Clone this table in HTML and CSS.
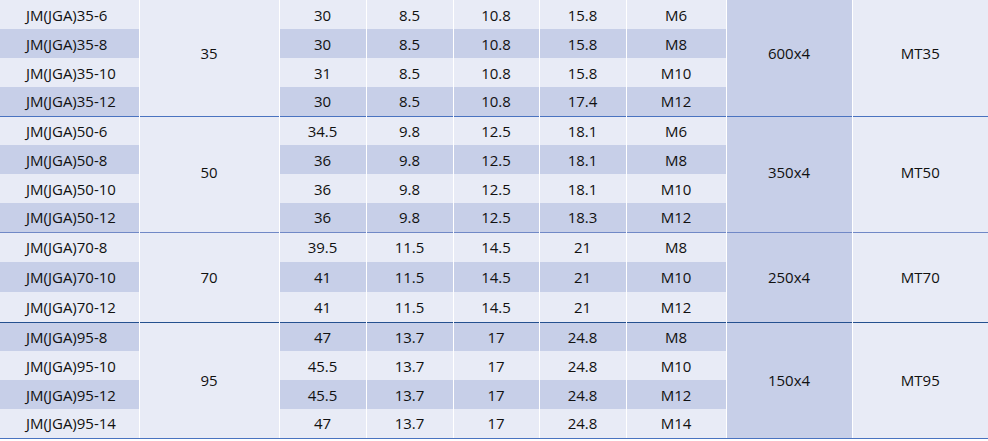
FILE: index.html
```html
<!DOCTYPE html>
<html>
<head>
<meta charset="utf-8">
<link rel="stylesheet" href="styles.css">
</head>
<body>
<table class="spec">
<colgroup>
<col class="c1"><col class="c2"><col class="c3"><col class="c4"><col class="c5"><col class="c6"><col class="c7"><col class="c8"><col class="c9">
</colgroup>
<tbody>
<tr class="g1 first"><td class="model">JM(JGA)35-6</td><td class="merge" rowspan="4">35</td><td>30</td><td>8.5</td><td>10.8</td><td>15.8</td><td>M6</td><td class="merge dark" rowspan="4">600x4</td><td class="merge" rowspan="4">MT35</td></tr>
<tr class="g1"><td class="model">JM(JGA)35-8</td><td>30</td><td>8.5</td><td>10.8</td><td>15.8</td><td>M8</td></tr>
<tr class="g1"><td class="model">JM(JGA)35-10</td><td>31</td><td>8.5</td><td>10.8</td><td>15.8</td><td>M10</td></tr>
<tr class="g1"><td class="model">JM(JGA)35-12</td><td>30</td><td>8.5</td><td>10.8</td><td>17.4</td><td>M12</td></tr>

<tr class="g2 first"><td class="model">JM(JGA)50-6</td><td class="merge" rowspan="4">50</td><td>34.5</td><td>9.8</td><td>12.5</td><td>18.1</td><td>M6</td><td class="merge dark" rowspan="4">350x4</td><td class="merge" rowspan="4">MT50</td></tr>
<tr class="g2"><td class="model">JM(JGA)50-8</td><td>36</td><td>9.8</td><td>12.5</td><td>18.1</td><td>M8</td></tr>
<tr class="g2"><td class="model">JM(JGA)50-10</td><td>36</td><td>9.8</td><td>12.5</td><td>18.1</td><td>M10</td></tr>
<tr class="g2"><td class="model">JM(JGA)50-12</td><td>36</td><td>9.8</td><td>12.5</td><td>18.3</td><td>M12</td></tr>

<tr class="g3 first"><td class="model">JM(JGA)70-8</td><td class="merge" rowspan="3">70</td><td>39.5</td><td>11.5</td><td>14.5</td><td>21</td><td>M8</td><td class="merge dark" rowspan="3">250x4</td><td class="merge" rowspan="3">MT70</td></tr>
<tr class="g3"><td class="model">JM(JGA)70-10</td><td>41</td><td>11.5</td><td>14.5</td><td>21</td><td>M10</td></tr>
<tr class="g3"><td class="model">JM(JGA)70-12</td><td>41</td><td>11.5</td><td>14.5</td><td>21</td><td>M12</td></tr>

<tr class="g4 first"><td class="model">JM(JGA)95-8</td><td class="merge" rowspan="4">95</td><td>47</td><td>13.7</td><td>17</td><td>24.8</td><td>M8</td><td class="merge dark" rowspan="4">150x4</td><td class="merge" rowspan="4">MT95</td></tr>
<tr class="g4"><td class="model">JM(JGA)95-10</td><td>45.5</td><td>13.7</td><td>17</td><td>24.8</td><td>M10</td></tr>
<tr class="g4"><td class="model">JM(JGA)95-12</td><td>45.5</td><td>13.7</td><td>17</td><td>24.8</td><td>M12</td></tr>
<tr class="g4 last"><td class="model">JM(JGA)95-14</td><td>47</td><td>13.7</td><td>17</td><td>24.8</td><td>M14</td></tr>
</tbody>
</table>
</body>
</html>
```
FILE: styles.css
```css
html, body {
  margin: 0;
  padding: 0;
  background: #ffffff;
}
.spec {
  width: 988px;
  table-layout: fixed;
  border-collapse: collapse;
  font-family: "Open Sans", "Noto Sans", sans-serif;
  font-size: 15px;
  color: #111111;
}
.c1 { width: 139px; }
.c2 { width: 140px; }
.c3 { width: 87px; }
.c4 { width: 87px; }
.c5 { width: 86px; }
.c6 { width: 87px; }
.c7 { width: 100px; }
.c8 { width: 126px; }
.c9 { width: 136px; }

.spec td {
  padding: 0;
  text-align: center;
  vertical-align: middle;
  background: #e8ebf6;
  border-left: 1px solid #ffffff;
  border-right: 1px solid #ffffff;
  line-height: 18px;
  white-space: nowrap;
}
.spec td:first-child { border-left: none; }
.spec td.model {
  text-align: left;
  padding-left: 26px;
}
.spec tr:nth-child(even) td { background: #c7cfe8; }
.spec tr td.merge { background: #e8ebf6; }
.spec tr td.merge.dark { background: #c7cfe8; }
.spec tr td:last-child { border-right: none; }
.spec tr.g1.first td.merge { padding-bottom: 10px; }
.spec tr.g2.first td.merge { padding-bottom: 4px; }

.g1 { height: 29px; }
.g2 { height: 29px; }
.g3 { height: 30px; }
.g4 { height: 29px; }

.g2.first td { border-top: 1px solid #4a73c0; }
.g3.first td { border-top: 1px solid #7088c6; }
.g4.first td { border-top: 1px solid #24508f; }
.g4.last td, .g4.first td.merge { border-bottom: 1px solid #4a73c0; }
```
